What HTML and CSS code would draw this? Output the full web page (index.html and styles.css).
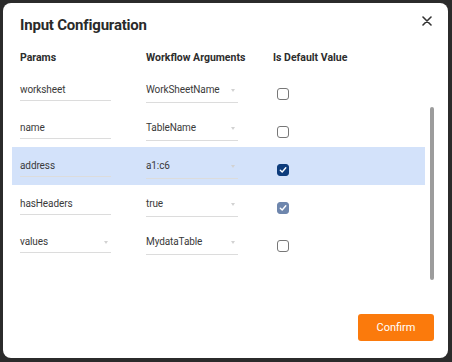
FILE: index.html
```html
<!DOCTYPE html>
<html lang="en">
<head>
    <meta charset="UTF-8">
    <meta name="viewport" content="width=device-width, initial-scale=1.0">
    <title>Input Configuration</title>
    <link rel="stylesheet" href="styles.css">
</head>
<body>
    <div class="dialog">
        <div class="dialog-header">
            <h1>Input Configuration</h1>
            <button class="close-btn" aria-label="Close">
                <svg width="10" height="10" viewBox="0 0 10 10">
                    <path d="M1 1 L9 9 M9 1 L1 9" stroke="#333" stroke-width="1.6" stroke-linecap="round"/>
                </svg>
            </button>
        </div>

        <div class="columns">
            <span>Params</span>
            <span>Workflow Arguments</span>
            <span>Is Default Value</span>
        </div>

        <div class="scroll-area">
            <div class="rows">
                <div class="row">
                    <div class="field">worksheet</div>
                    <div class="field select">WorkSheetName<span class="arrow"></span></div>
                    <div class="check"></div>
                </div>
                <div class="row">
                    <div class="field">name</div>
                    <div class="field select">TableName<span class="arrow"></span></div>
                    <div class="check"></div>
                </div>
                <div class="row selected">
                    <div class="field">address</div>
                    <div class="field select">a1:c6<span class="arrow"></span></div>
                    <div class="check checked">
                        <svg width="8" height="8" viewBox="0 0 8 8"><path d="M1.3 4.2 L3.2 6 L6.8 1.8" fill="none" stroke="#fff" stroke-width="1.4" stroke-linecap="round" stroke-linejoin="round"/></svg>
                    </div>
                </div>
                <div class="row">
                    <div class="field">hasHeaders</div>
                    <div class="field select">true<span class="arrow"></span></div>
                    <div class="check checked disabled">
                        <svg width="8" height="8" viewBox="0 0 8 8"><path d="M1.3 4.2 L3.2 6 L6.8 1.8" fill="none" stroke="#fff" stroke-width="1.4" stroke-linecap="round" stroke-linejoin="round"/></svg>
                    </div>
                </div>
                <div class="row">
                    <div class="field param-select">values<span class="arrow"></span></div>
                    <div class="field select">MydataTable<span class="arrow"></span></div>
                    <div class="check"></div>
                </div>
            </div>
            <div class="scrollbar"><div class="thumb"></div></div>
        </div>

        <div class="dialog-footer">
            <button class="confirm-btn">Confirm</button>
        </div>
    </div>
</body>
</html>
```

FILE: styles.css
```css
html, body {
    margin: 0;
    height: 100%;
}
body {
    font-family: Roboto, Arial, sans-serif;
    background-color: #2b2b2b;
    padding: 3px 4px 4px 3px;
    box-sizing: border-box;
}
.dialog {
    background-color: #fff;
    border-radius: 8px;
    height: 100%;
    display: flex;
    flex-direction: column;
    padding: 12px 14px 0 17px;
    box-sizing: border-box;
}
.dialog-header {
    display: flex;
    justify-content: space-between;
    align-items: flex-start;
}
h1 {
    margin: 0;
    font-size: 15px;
    line-height: 20px;
    font-weight: 700;
    letter-spacing: -0.2px;
    color: #2a2a2a;
}
.close-btn {
    background: none;
    border: none;
    padding: 0;
    margin: 1px 2px 0 0;
    cursor: pointer;
    line-height: 0;
}
.columns {
    display: grid;
    grid-template-columns: 91px 92px auto;
    column-gap: 35px;
    margin-top: 15px;
    font-size: 10.5px;
    line-height: 16px;
    font-weight: 700;
    white-space: nowrap;
    color: #2d2d2d;
}
.scroll-area {
    display: flex;
    height: 219px;
    margin: 5px 0 0 -8px;
}
.rows {
    width: 413px;
}
.row {
    display: grid;
    grid-template-columns: 91px 92px auto;
    column-gap: 35px;
    height: 38px;
    padding-left: 8px;
    box-sizing: border-box;
}
.row.selected {
    background-color: #d3e2fa;
}
.field {
    padding-top: 12px;
    padding-bottom: 3px;
    line-height: 14px;
    height: 14px;
    font-size: 10px;
    letter-spacing: -0.1px;
    color: #3a3a3a;
    border-bottom: 1px solid #dcdcdc;
    display: flex;
    justify-content: space-between;
    align-items: center;
}
.field.select {
    padding-bottom: 5px;
}
.arrow {
    width: 0;
    height: 0;
    border-left: 2.5px solid transparent;
    border-right: 2.5px solid transparent;
    border-top: 3px solid #d2d2d2;
    margin-right: 3px;
}
.check {
    width: 12px;
    height: 12px;
    margin: 17px 0 0 4px;
    border: 1px solid #777;
    border-radius: 3px;
    box-sizing: border-box;
    background-color: #fff;
    display: flex;
    align-items: center;
    justify-content: center;
}
.check.checked {
    background-color: #0d3c7c;
    border-color: #0d3c7c;
}
.check.checked.disabled {
    background-color: #6e86ad;
    border-color: #6e86ad;
}
.scrollbar {
    width: 4px;
    margin-left: 5px;
}
.thumb {
    margin-top: 36px;
    height: 173px;
    background-color: #9c9c9c;
    border-radius: 2px;
}
.dialog-footer {
    display: flex;
    justify-content: flex-end;
    padding-top: 24px;
}
.confirm-btn {
    width: 76px;
    height: 27px;
    background-color: #fb7a0c;
    border: none;
    border-radius: 3px;
    color: #fff;
    font-family: Roboto, Arial, sans-serif;
    font-size: 11px;
    cursor: pointer;
}
```
